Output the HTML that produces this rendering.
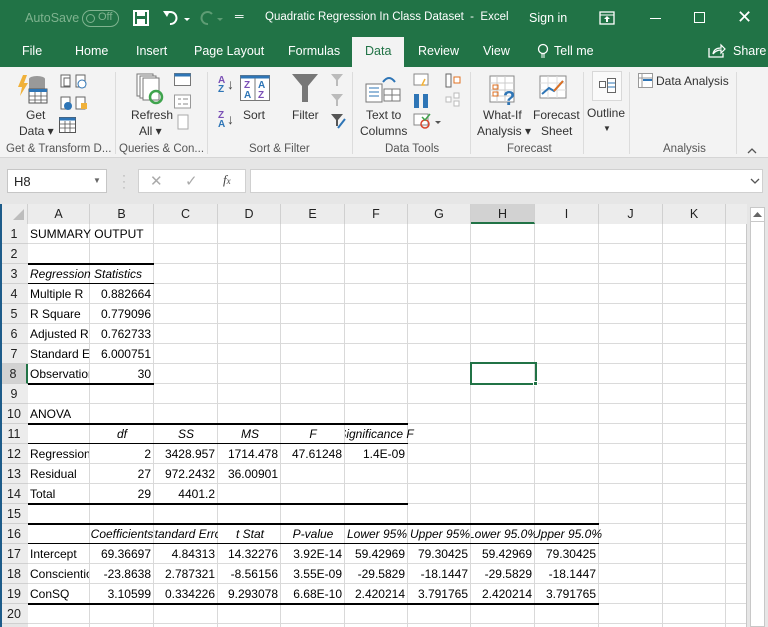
<!DOCTYPE html>
<html><head><meta charset="utf-8">
<style>
*{margin:0;padding:0;box-sizing:border-box}
html,body{width:768px;height:627px;overflow:hidden}
body{position:relative;background:#e6e6e6;font-family:"Liberation Sans",sans-serif;color:#000}
.a{position:absolute;white-space:nowrap}
.t{color:#fff;font-size:12.5px}
.rl{font-size:12px;color:#333;line-height:15px}
.gl{font-size:11.5px;color:#555}
.c{position:absolute;height:20px;line-height:21px;overflow:hidden;white-space:nowrap;font-size:12px}
.r{text-align:right;padding-right:3px}
.i{font-style:italic}
.ctr{position:absolute;top:0;transform:translateX(-50%);font-style:italic}
.vl{position:absolute;top:204px;width:1px;height:423px;background:#d9d9d9}
.hb{position:absolute;height:2px;background:#000}
.ht{position:absolute;height:1px;background:#000}
.rh{position:absolute;left:0;width:28px;height:20px;line-height:21px;text-align:center;font-size:12.5px;color:#222;border-bottom:1px solid #d0d0d0;background:#ececec}
.ch{position:absolute;top:204px;height:20px;line-height:21px;text-align:center;font-size:12.5px;color:#222;border-right:1px solid #d0d0d0;background:#ececec}
</style></head><body>
<!-- title bar -->
<div class="a" style="left:0;top:0;width:768px;height:67px;background:#217346"></div>
<div class="a t" style="left:25px;top:11px;color:#7fb38f">AutoSave</div>
<div class="a" style="left:82px;top:10px;width:37px;height:17px;border:1.5px solid #7fb38f;border-radius:9px"></div>
<div class="a" style="left:86px;top:14px;width:9px;height:9px;border:1.5px solid #7fb38f;border-radius:50%"></div>
<div class="a" style="left:98px;top:11px;font-size:11px;color:#7fb38f">Off</div>
<svg class="a" style="left:133px;top:10px" width="16" height="16"><rect x="1" y="1" width="14" height="14" fill="none" stroke="#fff" stroke-width="2"/><rect x="4" y="1" width="8" height="5" fill="#fff"/><rect x="4" y="9" width="8" height="6" fill="#fff"/></svg>
<svg class="a" style="left:162px;top:9px" width="30" height="18"><path d="M4 5 A6 6 0 1 1 8 15" fill="none" stroke="#fff" stroke-width="2"/><path d="M1 2 L5 8 L8 2Z" fill="#fff"/><path d="M22 9 l3 3 l3-3z" fill="#fff"/></svg>
<svg class="a" style="left:198px;top:9px" width="30" height="18"><path d="M14 5 A6 6 0 1 0 10 15" fill="none" stroke="#5e9c74" stroke-width="2"/><path d="M19 9 l3 3 l3-3z" fill="#5e9c74"/></svg>
<div class="a t" style="left:235px;top:9px;font-size:12px">&#x2550;</div>
<div class="a t" style="left:265px;top:11px;font-size:11.5px">Quadratic Regression In Class Dataset&nbsp; -&nbsp; Excel</div>
<div class="a t" style="left:529px;top:11px">Sign in</div>
<svg class="a" style="left:599px;top:11px" width="16" height="14"><rect x="1" y="1" width="14" height="12" fill="none" stroke="#fff" stroke-width="1.3"/><line x1="1" y1="4" x2="15" y2="4" stroke="#fff"/><path d="M8 5 l-3 3 h2 v3 h2 v-3 h2z" fill="#fff"/></svg>
<div class="a" style="left:650px;top:18px;width:11px;height:1px;background:#fff"></div>
<div class="a" style="left:694px;top:12px;width:11px;height:11px;border:1px solid #fff"></div>
<div class="a t" style="left:737px;top:7px;font-size:18px">&#x2715;</div>
<!-- tabs -->
<div class="a t" style="left:22px;top:44px">File</div>
<div class="a t" style="left:75px;top:44px">Home</div>
<div class="a t" style="left:136px;top:44px">Insert</div>
<div class="a t" style="left:194px;top:44px">Page Layout</div>
<div class="a t" style="left:288px;top:44px">Formulas</div>
<div class="a" style="left:352px;top:37px;width:52px;height:31px;background:#f3f3f3"></div>
<div class="a t" style="left:365px;top:44px;color:#217346">Data</div>
<div class="a t" style="left:418px;top:44px">Review</div>
<div class="a t" style="left:483px;top:44px">View</div>
<svg class="a" style="left:537px;top:43px" width="12" height="16"><circle cx="6" cy="6" r="4.5" fill="none" stroke="#fff" stroke-width="1.3"/><line x1="4" y1="12" x2="8" y2="12" stroke="#fff"/><line x1="4" y1="14" x2="8" y2="14" stroke="#fff"/></svg>
<div class="a t" style="left:554px;top:44px">Tell me</div>
<svg class="a" style="left:708px;top:43px" width="18" height="15"><path d="M1 5 v9 h14 v-4" fill="none" stroke="#fff" stroke-width="1.3"/><path d="M5 11 q1-6 8-6 v-3 l4 4 l-4 4 v-3 q-5 0-8 4z" fill="none" stroke="#fff" stroke-width="1.2"/></svg>
<div class="a t" style="left:733px;top:44px">Share</div>
<!-- ribbon -->
<div class="a" style="left:0;top:67px;width:768px;height:91px;background:#f3f3f3;border-bottom:1px solid #d5d5d5"></div>
<div class="a" style="left:115px;top:72px;width:1px;height:82px;background:#dcdcdc"></div>
<div class="a" style="left:207px;top:72px;width:1px;height:82px;background:#dcdcdc"></div>
<div class="a" style="left:352px;top:72px;width:1px;height:82px;background:#dcdcdc"></div>
<div class="a" style="left:470px;top:72px;width:1px;height:82px;background:#dcdcdc"></div>
<div class="a" style="left:583px;top:72px;width:1px;height:82px;background:#dcdcdc"></div>
<div class="a" style="left:629px;top:72px;width:1px;height:82px;background:#dcdcdc"></div>
<div class="a" style="left:736px;top:72px;width:1px;height:82px;background:#dcdcdc"></div>
<svg class="a" style="left:17px;top:73px" width="40" height="32"><path d="M6 2 L1 14 h4 l-2 9 l8-13 h-4 l3-8z" fill="#f0b13a"/><ellipse cx="20" cy="6" rx="8" ry="3" fill="#999"/><rect x="12" y="6" width="16" height="14" fill="#999"/><rect x="12" y="16" width="18" height="14" fill="#fff" stroke="#555"/><rect x="12" y="16" width="18" height="3" fill="#2e75b6"/><path d="M12 23 h18 M12 27 h18 M18 19 v11 M24 19 v11" stroke="#555" stroke-width=".8"/></svg>
<svg class="a" style="left:60px;top:74px" width="40" height="40"><rect x="1" y="1" width="9" height="12" fill="#fff" stroke="#666"/><rect x="4" y="4" width="6" height="8" fill="#fff" stroke="#666"/><rect x="16" y="1" width="9" height="12" fill="#fff" stroke="#666"/><circle cx="22" cy="10" r="4" fill="#fff" stroke="#2e75b6"/><rect x="1" y="23" width="9" height="12" fill="#fff" stroke="#666"/><circle cx="8" cy="32" r="4" fill="#2e75b6"/><rect x="16" y="23" width="9" height="12" fill="#fff" stroke="#666"/><rect x="21" y="29" width="6" height="6" fill="#f0b13a"/></svg>
<svg class="a" style="left:59px;top:117px" width="17" height="16"><rect x=".5" y=".5" width="16" height="15" fill="#fff" stroke="#555"/><rect x=".5" y=".5" width="16" height="3" fill="#2e75b6"/><path d="M1 7 h15 M1 11 h15 M6 4 v11 M11 4 v11" stroke="#555" stroke-width=".8"/></svg>
<div class="a rl" style="left:26px;top:108px">Get</div>
<div class="a rl" style="left:19px;top:124px">Data ▾</div>
<svg class="a" style="left:136px;top:73px" width="30" height="32"><rect x="1" y="1" width="16" height="22" fill="#fff" stroke="#777"/><rect x="4" y="3" width="16" height="22" fill="#fff" stroke="#777"/><rect x="7" y="5" width="16" height="22" fill="#fff" stroke="#777"/><circle cx="20" cy="24" r="6" fill="none" stroke="#3fa34d" stroke-width="2.5"/></svg>
<svg class="a" style="left:174px;top:73px" width="18" height="60"><rect x=".5" y=".5" width="16" height="12" fill="#fff" stroke="#777"/><rect x=".5" y=".5" width="16" height="3" fill="#2e75b6"/><rect x=".5" y="22" width="16" height="13" fill="#fff" stroke="#999"/><path d="M4 26 h3 M9 26 h5 M4 31 h3 M9 31 h5" stroke="#888"/><rect x="4" y="42" width="10" height="14" fill="#fff" stroke="#aaa"/></svg>
<div class="a rl" style="left:131px;top:108px">Refresh</div>
<div class="a rl" style="left:139px;top:124px">All ▾</div>
<div class="a" style="left:218px;top:76px;font-size:10px;line-height:9px;color:#7a4fb5;font-weight:bold">A<br><span style="color:#2e75b6">Z</span></div>
<div class="a" style="left:227px;top:76px;font-size:14px;color:#444">↓</div>
<div class="a" style="left:218px;top:111px;font-size:10px;line-height:9px;color:#7a4fb5;font-weight:bold">Z<br><span style="color:#2e75b6">A</span></div>
<div class="a" style="left:227px;top:111px;font-size:14px;color:#444">↓</div>
<svg class="a" style="left:240px;top:75px" width="30" height="26"><rect x=".5" y=".5" width="29" height="25" fill="#fff" stroke="#777"/><rect x=".5" y=".5" width="29" height="3" fill="#2e75b6"/><line x1="15" y1="3" x2="15" y2="25" stroke="#777"/><text x="4" y="13" font-size="10" font-weight="bold" fill="#7a4fb5" font-family="Liberation Sans">Z</text><text x="4" y="23" font-size="10" font-weight="bold" fill="#2e75b6" font-family="Liberation Sans">A</text><text x="18" y="13" font-size="10" font-weight="bold" fill="#2e75b6" font-family="Liberation Sans">A</text><text x="18" y="23" font-size="10" font-weight="bold" fill="#7a4fb5" font-family="Liberation Sans">Z</text></svg>
<div class="a rl" style="left:243px;top:108px">Sort</div>
<svg class="a" style="left:291px;top:73px" width="28" height="30"><path d="M1 1 h26 l-10 12 v16 h-6 v-16z" fill="#777"/></svg>
<div class="a rl" style="left:292px;top:108px">Filter</div>
<svg class="a" style="left:330px;top:73px" width="16" height="60"><path d="M1 1 h12 l-5 6 v6 h-2 v-6z" fill="#bbb"/><path d="M1 21 h12 l-5 6 v6 h-2 v-6z" fill="#bbb"/><path d="M1 41 h12 l-5 6 v6 h-2 v-6z" fill="#555"/><line x1="8" y1="55" x2="15" y2="46" stroke="#2e75b6" stroke-width="2"/></svg>
<svg class="a" style="left:365px;top:74px" width="36" height="30"><path d="M18 8 q6-8 12 0" fill="none" stroke="#2e75b6" stroke-width="2"/><rect x="1" y="10" width="16" height="18" fill="#fff" stroke="#777"/><path d="M4 14 h10 M4 18 h10 M4 22 h10" stroke="#2e75b6"/><rect x="19" y="15" width="16" height="12" fill="#fff" stroke="#777"/><path d="M19 21 h16 M27 15 v12" stroke="#777"/></svg>
<div class="a rl" style="left:366px;top:108px">Text to</div>
<div class="a rl" style="left:360px;top:124px">Columns</div>
<svg class="a" style="left:413px;top:73px" width="60" height="62"><rect x="1" y="1" width="14" height="11" fill="#fff" stroke="#888"/><path d="M12 6 l-3 6 h3" stroke="#f0b13a" fill="none" stroke-width="1.5"/><rect x="1" y="21" width="5" height="14" fill="#2e75b6"/><rect x="10" y="21" width="5" height="14" fill="#2e75b6"/><rect x="1" y="41" width="14" height="11" fill="#fff" stroke="#888"/><circle cx="12" cy="51" r="4" fill="none" stroke="#d9452b" stroke-width="1.5"/><path d="M9 44 l3 3 l5-6" stroke="#3fa34d" fill="none" stroke-width="1.5"/><path d="M22 48 l3 3 l3-3z" fill="#555"/><rect x="33" y="1" width="5" height="13" fill="#fff" stroke="#666"/><rect x="41" y="4" width="6" height="6" fill="#fff" stroke="#e07020"/><rect x="33" y="24" width="5" height="5" fill="#fff" stroke="#bbb"/><rect x="41" y="20" width="5" height="5" fill="#fff" stroke="#bbb"/><rect x="41" y="28" width="5" height="5" fill="#fff" stroke="#bbb"/></svg>
<svg class="a" style="left:489px;top:75px" width="30" height="32"><rect x="1" y="1" width="24" height="26" fill="#fff" stroke="#888"/><path d="M1 8 h24 M1 15 h24 M1 21 h24 M8 1 v26 M16 1 v26" stroke="#ccc"/><rect x="4" y="10" width="5" height="4" fill="none" stroke="#e07020"/><rect x="4" y="17" width="5" height="4" fill="none" stroke="#e07020"/><text x="14" y="30" font-size="20" font-weight="bold" fill="#2e75b6" font-family="Liberation Sans">?</text></svg>
<div class="a rl" style="left:483px;top:108px">What-If</div>
<div class="a rl" style="left:477px;top:124px">Analysis ▾</div>
<svg class="a" style="left:539px;top:75px" width="30" height="28"><rect x="1" y="1" width="26" height="22" fill="#fff" stroke="#888"/><path d="M1 8 h26 M1 15 h26 M9 1 v22 M18 1 v22" stroke="#ddd"/><path d="M3 19 l7-6 l5 3 l9-10" stroke="#2e75b6" fill="none" stroke-width="2"/><path d="M15 16 l9-10" stroke="#e07020" stroke-width="2"/></svg>
<div class="a rl" style="left:533px;top:108px">Forecast</div>
<div class="a rl" style="left:541px;top:124px">Sheet</div>
<div class="a" style="left:592px;top:71px;width:30px;height:30px;background:#fafafa;border:1px solid #d8d8d8"></div>
<svg class="a" style="left:599px;top:78px" width="18" height="16"><rect x=".5" y="3.5" width="6" height="6" fill="#fff" stroke="#666"/><rect x="8.5" y=".5" width="8" height="14" fill="#fff" stroke="#666"/><path d="M9 5 h7 M9 9 h7" stroke="#2e75b6"/></svg>
<div class="a rl" style="left:587px;top:106px">Outline</div>
<div class="a rl" style="left:603px;top:121px;font-size:8px">▼</div>
<svg class="a" style="left:638px;top:73px" width="16" height="16"><rect x=".5" y=".5" width="14" height="14" fill="#fff" stroke="#999"/><path d="M4 1 v14 M1 5 h14" stroke="#999"/><rect x="5" y="6" width="9" height="2" fill="#2e75b6"/></svg>
<div class="a rl" style="left:656px;top:74px">Data Analysis</div>
<div class="a gl" style="left:6px;top:143px">Get &amp; Transform D...</div>
<div class="a gl" style="left:119px;top:143px">Queries &amp; Con...</div>
<div class="a gl" style="left:249px;top:143px">Sort &amp; Filter</div>
<div class="a gl" style="left:385px;top:143px">Data Tools</div>
<div class="a gl" style="left:507px;top:143px">Forecast</div>
<div class="a gl" style="left:663px;top:143px">Analysis</div>
<svg class="a" style="left:747px;top:147px" width="10" height="7"><path d="M1 6 l4-4 l4 4" stroke="#555" fill="none" stroke-width="1.3"/></svg>
<!-- formula bar -->
<div class="a" style="left:7px;top:169px;width:100px;height:24px;background:#fff;border:1px solid #c6c6c6"></div>
<div class="a" style="left:14px;top:174px;font-size:13px;color:#222">H8</div>
<div class="a" style="left:93px;top:176px;font-size:8px;color:#666">▼</div>
<div class="a" style="left:122px;top:172px;font-size:12px;color:#aaa;line-height:6px">·<br>·<br>·</div>
<div class="a" style="left:138px;top:169px;width:108px;height:24px;background:#fff;border:1px solid #d0d0d0"></div>
<div class="a" style="left:150px;top:172px;font-size:15px;color:#aaa">✕</div>
<div class="a" style="left:185px;top:172px;font-size:15px;color:#aaa">✓</div>
<div class="a" style="left:223px;top:172px;font-size:13px;color:#444;font-style:italic;font-family:'Liberation Serif',serif">f<span style="font-size:9px">x</span></div>
<div class="a" style="left:250px;top:169px;width:513px;height:24px;background:#fff;border:1px solid #d0d0d0"></div>
<svg class="a" style="left:750px;top:178px" width="10" height="7"><path d="M1 1 l4 4 l4-4" stroke="#555" fill="none" stroke-width="1.3"/></svg>
<!-- grid -->
<div class="a" style="left:28px;top:224px;width:719px;height:403px;background:#fff repeating-linear-gradient(to bottom,transparent 0 19px,#dadada 19px 20px)"></div>
<div class="ch" style="left:0;width:28px;background:#ececec"></div>
<svg class="a" style="left:13px;top:209px" width="12" height="12"><path d="M11 0 V11 H0z" fill="#bdbdbd"/></svg>
<div class="ch" style="left:28px;width:62px">A</div>
<div class="ch" style="left:90px;width:64px">B</div>
<div class="ch" style="left:154px;width:64px">C</div>
<div class="ch" style="left:218px;width:63px">D</div>
<div class="ch" style="left:281px;width:64px">E</div>
<div class="ch" style="left:345px;width:63px">F</div>
<div class="ch" style="left:408px;width:63px">G</div>
<div class="ch" style="left:471px;width:64px;background:#d2d2d2;border-bottom:2px solid #217346">H</div>
<div class="ch" style="left:535px;width:64px">I</div>
<div class="ch" style="left:599px;width:64px">J</div>
<div class="ch" style="left:663px;width:63px">K</div>
<div class="ch" style="left:726px;width:21px;border-right:none"></div>
<div class="vl" style="left:89px;top:224px;height:403px"></div>
<div class="vl" style="left:153px;top:224px;height:403px"></div>
<div class="vl" style="left:217px;top:224px;height:403px"></div>
<div class="vl" style="left:280px;top:224px;height:403px"></div>
<div class="vl" style="left:344px;top:224px;height:403px"></div>
<div class="vl" style="left:407px;top:224px;height:403px"></div>
<div class="vl" style="left:470px;top:224px;height:403px"></div>
<div class="vl" style="left:534px;top:224px;height:403px"></div>
<div class="vl" style="left:598px;top:224px;height:403px"></div>
<div class="vl" style="left:662px;top:224px;height:403px"></div>
<div class="vl" style="left:725px;top:224px;height:403px"></div>
<div class="vl" style="left:746px;top:224px;height:403px;background:#c8c8c8"></div>
<div class="rh" style="top:224px">1</div><div class="rh" style="top:244px">2</div><div class="rh" style="top:264px">3</div><div class="rh" style="top:284px">4</div><div class="rh" style="top:304px">5</div><div class="rh" style="top:324px">6</div><div class="rh" style="top:344px">7</div><div class="rh" style="top:364px;background:#d2d2d2;border-right:2px solid #217346">8</div><div class="rh" style="top:384px">9</div><div class="rh" style="top:404px">10</div><div class="rh" style="top:424px">11</div><div class="rh" style="top:444px">12</div><div class="rh" style="top:464px">13</div><div class="rh" style="top:484px">14</div><div class="rh" style="top:504px">15</div><div class="rh" style="top:524px">16</div><div class="rh" style="top:544px">17</div><div class="rh" style="top:564px">18</div><div class="rh" style="top:584px">19</div><div class="rh" style="top:604px">20</div>
<div class="a" style="left:0;top:204px;width:2px;height:423px;background:#1d5c8a"></div>
<!-- cell content -->
<div class="c" style="left:30px;top:224px;width:150px">SUMMARY OUTPUT</div>
<div class="c i" style="left:30px;top:264px;width:124px">Regression Statistics</div>
<div class="c" style="left:30px;top:284px;width:59px">Multiple R</div><div class="c r" style="left:90px;top:284px;width:64px">0.882664</div>
<div class="c" style="left:30px;top:304px;width:59px">R Square</div><div class="c r" style="left:90px;top:304px;width:64px">0.779096</div>
<div class="c" style="left:30px;top:324px;width:59px">Adjusted R Square</div><div class="c r" style="left:90px;top:324px;width:64px">0.762733</div>
<div class="c" style="left:30px;top:344px;width:59px">Standard Error</div><div class="c r" style="left:90px;top:344px;width:64px">6.000751</div>
<div class="c" style="left:30px;top:364px;width:59px">Observations</div><div class="c r" style="left:90px;top:364px;width:64px">30</div>
<div class="c" style="left:30px;top:404px;width:80px">ANOVA</div>
<div class="c" style="left:90px;top:424px;width:64px"><span class="ctr" style="left:32px">df</span></div>
<div class="c" style="left:154px;top:424px;width:64px"><span class="ctr" style="left:32px">SS</span></div>
<div class="c" style="left:218px;top:424px;width:63px"><span class="ctr" style="left:32px">MS</span></div>
<div class="c" style="left:281px;top:424px;width:64px"><span class="ctr" style="left:32px">F</span></div>
<div class="c" style="left:345px;top:424px;width:126px"><span class="ctr" style="left:31px">Significance F</span></div>
<div class="c" style="left:30px;top:444px;width:59px">Regression</div><div class="c r" style="left:90px;top:444px;width:64px">2</div><div class="c r" style="left:154px;top:444px;width:64px">3428.957</div><div class="c r" style="left:218px;top:444px;width:63px">1714.478</div><div class="c r" style="left:281px;top:444px;width:64px">47.61248</div><div class="c r" style="left:345px;top:444px;width:63px">1.4E-09</div>
<div class="c" style="left:30px;top:464px;width:59px">Residual</div><div class="c r" style="left:90px;top:464px;width:64px">27</div><div class="c r" style="left:154px;top:464px;width:64px">972.2432</div><div class="c r" style="left:218px;top:464px;width:63px">36.00901</div>
<div class="c" style="left:30px;top:484px;width:59px">Total</div><div class="c r" style="left:90px;top:484px;width:64px">29</div><div class="c r" style="left:154px;top:484px;width:64px">4401.2</div>
<div class="c" style="left:28px;top:524px;width:126px"><span class="ctr" style="left:94px">Coefficients</span></div>
<div class="c" style="left:154px;top:524px;width:64px"><span class="ctr" style="left:32px">Standard Error</span></div>
<div class="c" style="left:218px;top:524px;width:63px"><span class="ctr" style="left:32px">t Stat</span></div>
<div class="c" style="left:281px;top:524px;width:64px"><span class="ctr" style="left:32px">P-value</span></div>
<div class="c" style="left:345px;top:524px;width:63px"><span class="ctr" style="left:32px">Lower 95%</span></div>
<div class="c" style="left:408px;top:524px;width:63px"><span class="ctr" style="left:32px">Upper 95%</span></div>
<div class="c" style="left:471px;top:524px;width:64px"><span class="ctr" style="left:32px">Lower 95.0%</span></div>
<div class="c" style="left:535px;top:524px;width:128px"><span class="ctr" style="left:32px">Upper 95.0%</span></div>
<div class="c" style="left:30px;top:544px;width:59px">Intercept</div><div class="c r" style="left:90px;top:544px;width:64px">69.36697</div><div class="c r" style="left:154px;top:544px;width:64px">4.84313</div><div class="c r" style="left:218px;top:544px;width:63px">14.32276</div><div class="c r" style="left:281px;top:544px;width:64px">3.92E-14</div><div class="c r" style="left:345px;top:544px;width:63px">59.42969</div><div class="c r" style="left:408px;top:544px;width:63px">79.30425</div><div class="c r" style="left:471px;top:544px;width:64px">59.42969</div><div class="c r" style="left:535px;top:544px;width:64px">79.30425</div>
<div class="c" style="left:30px;top:564px;width:59px">Conscientiousness</div><div class="c r" style="left:90px;top:564px;width:64px">-23.8638</div><div class="c r" style="left:154px;top:564px;width:64px">2.787321</div><div class="c r" style="left:218px;top:564px;width:63px">-8.56156</div><div class="c r" style="left:281px;top:564px;width:64px">3.55E-09</div><div class="c r" style="left:345px;top:564px;width:63px">-29.5829</div><div class="c r" style="left:408px;top:564px;width:63px">-18.1447</div><div class="c r" style="left:471px;top:564px;width:64px">-29.5829</div><div class="c r" style="left:535px;top:564px;width:64px">-18.1447</div>
<div class="c" style="left:30px;top:584px;width:59px">ConSQ</div><div class="c r" style="left:90px;top:584px;width:64px">3.10599</div><div class="c r" style="left:154px;top:584px;width:64px">0.334226</div><div class="c r" style="left:218px;top:584px;width:63px">9.293078</div><div class="c r" style="left:281px;top:584px;width:64px">6.68E-10</div><div class="c r" style="left:345px;top:584px;width:63px">2.420214</div><div class="c r" style="left:408px;top:584px;width:63px">3.791765</div><div class="c r" style="left:471px;top:584px;width:64px">2.420214</div><div class="c r" style="left:535px;top:584px;width:64px">3.791765</div>
<div class="hb" style="left:28px;top:263px;width:126px"></div>
<div class="ht" style="left:28px;top:283px;width:126px"></div>
<div class="hb" style="left:28px;top:383px;width:126px"></div>
<div class="hb" style="left:28px;top:423px;width:380px"></div>
<div class="ht" style="left:28px;top:443px;width:380px"></div>
<div class="hb" style="left:28px;top:503px;width:380px"></div>
<div class="hb" style="left:28px;top:523px;width:571px"></div>
<div class="ht" style="left:28px;top:543px;width:571px"></div>
<div class="hb" style="left:28px;top:603px;width:571px"></div>
<div class="a" style="left:470px;top:362px;width:67px;height:23px;border:2px solid #217346"></div>
<div class="a" style="left:533px;top:381px;width:5px;height:5px;background:#217346;border:1px solid #fff"></div>
<div class="a" style="left:750px;top:207px;width:15px;height:420px;background:#fff;border:1px solid #c8c8c8"></div>
<div class="a" style="left:750px;top:207px;width:15px;height:15px;border:1px solid #c8c8c8;background:#fff"></div>
<svg class="a" style="left:753px;top:212px" width="9" height="5"><path d="M0 5 L4.5 0 L9 5z" fill="#666"/></svg>
</body></html>
